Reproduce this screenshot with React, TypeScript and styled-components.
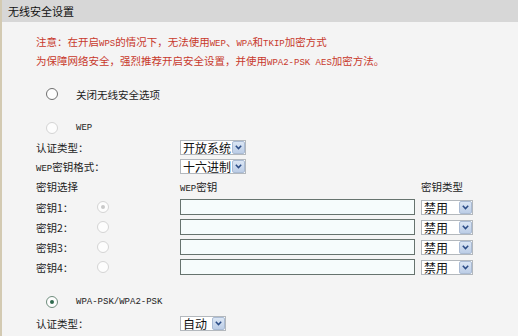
import { Fragment } from 'react'
import styled, { createGlobalStyle } from 'styled-components'

const GlobalStyle = createGlobalStyle`
  html, body {
    margin: 0;
    padding: 0;
    background: #f4f4f4;
  }
`

const CJK = `"Noto Sans CJK SC", "Noto Sans", sans-serif`

const Page = styled.div`
  width: 518px;
  height: 336px;
  overflow: hidden;
  box-sizing: border-box;
  border-left: 2px solid #d3cab2;
  background: #f4f4f4;
  font-family: ${CJK};
  color: #1c1c1c;
  font-size: 10.5px;
`

const TitleBar = styled.div`
  height: 22px;
  line-height: 22px;
  padding-left: 6px;
  background: #d7d7d7;
  font-size: 11px;
  color: #111;
`

const Content = styled.div`
  padding-left: 34px;
`

const Notice = styled.div`
  margin-top: 10px;
  color: #c8392c;
  white-space: nowrap;
`

const NoticeLine = styled.div`
  height: 19px;
  line-height: 19px;
`

const Latin = styled.span<{ $size?: number }>`
  font-family: 'Liberation Mono', 'DejaVu Sans Mono', monospace;
  font-size: ${(p) => p.$size ?? 9}px;
  line-height: 1;
`

const Text = styled.span`
  line-height: 14px;
`

const OptionRow = styled.div<{ $gap: number }>`
  display: flex;
  align-items: center;
  height: 20px;
  margin-top: ${(p) => p.$gap}px;
  padding-left: 10px;
  gap: 18px;
`

const Radio = styled.span<{ $state: 'off' | 'dim' | 'on' | 'dimOn' }>`
  position: relative;
  display: inline-block;
  box-sizing: border-box;
  width: 12px;
  height: 12px;
  border-radius: 50%;
  background: #fdfdfd;
  border: 1px solid
    ${(p) =>
      p.$state === 'off' ? '#6e6e6e' : p.$state === 'on' ? '#6f8d7d' : '#d4d4d4'};

  &::after {
    content: '';
    display: ${(p) => (p.$state === 'on' || p.$state === 'dimOn' ? 'block' : 'none')};
    position: absolute;
    left: 3px;
    top: 3px;
    width: 4px;
    height: 4px;
    border-radius: 50%;
    background: ${(p) => (p.$state === 'on' ? '#2f6a4e' : '#c9c9c9')};
  }
`

const Grid = styled.div<{ $top?: number }>`
  display: grid;
  grid-template-columns: 144px 241px 1fr;
  align-items: center;
  margin-top: ${(p) => p.$top ?? 0}px;
`

const Cell = styled.div<{ $h: number }>`
  height: ${(p) => p.$h}px;
  display: flex;
  align-items: center;
  white-space: nowrap;
`

const KeyLabel = styled.span`
  width: 61px;
`

const SelectBox = styled.div<{ $w: number }>`
  box-sizing: border-box;
  width: ${(p) => p.$w}px;
  height: 15px;
  display: flex;
  align-items: center;
  justify-content: space-between;
  background: #fff;
  border: 1px solid #b3b8bd;
  font-size: 12px;
  line-height: 13px;
  padding-left: 2px;
  color: #111;
`

const ArrowBtn = styled.span`
  width: 13px;
  height: 13px;
  box-sizing: border-box;
  display: flex;
  align-items: center;
  justify-content: center;
  background: linear-gradient(#dbe6f4, #bccde6);
  border: 1px solid #aabbd4;
  border-radius: 2px;
`

const KeyInput = styled.div`
  box-sizing: border-box;
  width: 235px;
  height: 16px;
  background: #f6fcfc;
  border: 1px solid #66736e;
`

const Arrow = () => (
  <ArrowBtn>
    <svg width="7" height="5" viewBox="0 0 7 5">
      <polyline points="0.8,0.8 3.5,3.6 6.2,0.8" fill="none" stroke="#2b4c86" strokeWidth="1.5" />
    </svg>
  </ArrowBtn>
)

const Select = ({ text, width }: { text: string; width: number }) => (
  <SelectBox $w={width}>
    <span>{text}</span>
    <Arrow />
  </SelectBox>
)

const keys = [1, 2, 3, 4]

export default function App() {
  return (
    <>
      <GlobalStyle />
      <Page>
        <TitleBar>无线安全设置</TitleBar>
        <Content>
          <Notice>
            <NoticeLine>
              注意：在开启<Latin>WPS</Latin>的情况下，无法使用<Latin>WEP</Latin>、
              <Latin>WPA</Latin>和<Latin>TKIP</Latin>加密方式
            </NoticeLine>
            <NoticeLine>
              为保障网络安全，强烈推荐开启安全设置，并使用<Latin>WPA2-PSK AES</Latin>加密方法。
            </NoticeLine>
          </Notice>

          <OptionRow $gap={14}>
            <Radio $state="off" />
            <span>关闭无线安全选项</span>
          </OptionRow>

          <OptionRow $gap={14}>
            <Radio $state="dim" />
            <Latin>WEP</Latin>
          </OptionRow>

          <Grid>
            <Cell $h={19}>
              <Text>认证类型：</Text>
            </Cell>
            <Cell $h={19}>
              <Select text="开放系统" width={66} />
            </Cell>
            <Cell $h={19} />

            <Cell $h={19}>
              <Text>
                <Latin>WEP</Latin>密钥格式：
              </Text>
            </Cell>
            <Cell $h={19}>
              <Select text="十六进制" width={66} />
            </Cell>
            <Cell $h={19} />

            <Cell $h={21}>
              <Text>密钥选择</Text>
            </Cell>
            <Cell $h={21}>
              <Text>
                <Latin>WEP</Latin>密钥
              </Text>
            </Cell>
            <Cell $h={21}>
              <Text>密钥类型</Text>
            </Cell>

            {keys.map((k) => (
              <Fragment key={k}>
                <Cell $h={20}>
                  <KeyLabel>密钥{k}：</KeyLabel>
                  <Radio $state={k === 1 ? 'dimOn' : 'dim'} />
                </Cell>
                <Cell $h={20}>
                  <KeyInput />
                </Cell>
                <Cell $h={20}>
                  <SelectBox $w={52}>
                    <span>禁用</span>
                    <Arrow />
                  </SelectBox>
                </Cell>
              </Fragment>
            ))}
          </Grid>

          <OptionRow $gap={15}>
            <Radio $state="on" />
            <Latin>WPA-PSK/WPA2-PSK</Latin>
          </OptionRow>

          <Grid $top={2}>
            <Cell $h={19}>
              <Text>认证类型：</Text>
            </Cell>
            <Cell $h={19}>
              <Select text="自动" width={46} />
            </Cell>
            <Cell $h={19} />
          </Grid>
        </Content>
      </Page>
    </>
  )
}
